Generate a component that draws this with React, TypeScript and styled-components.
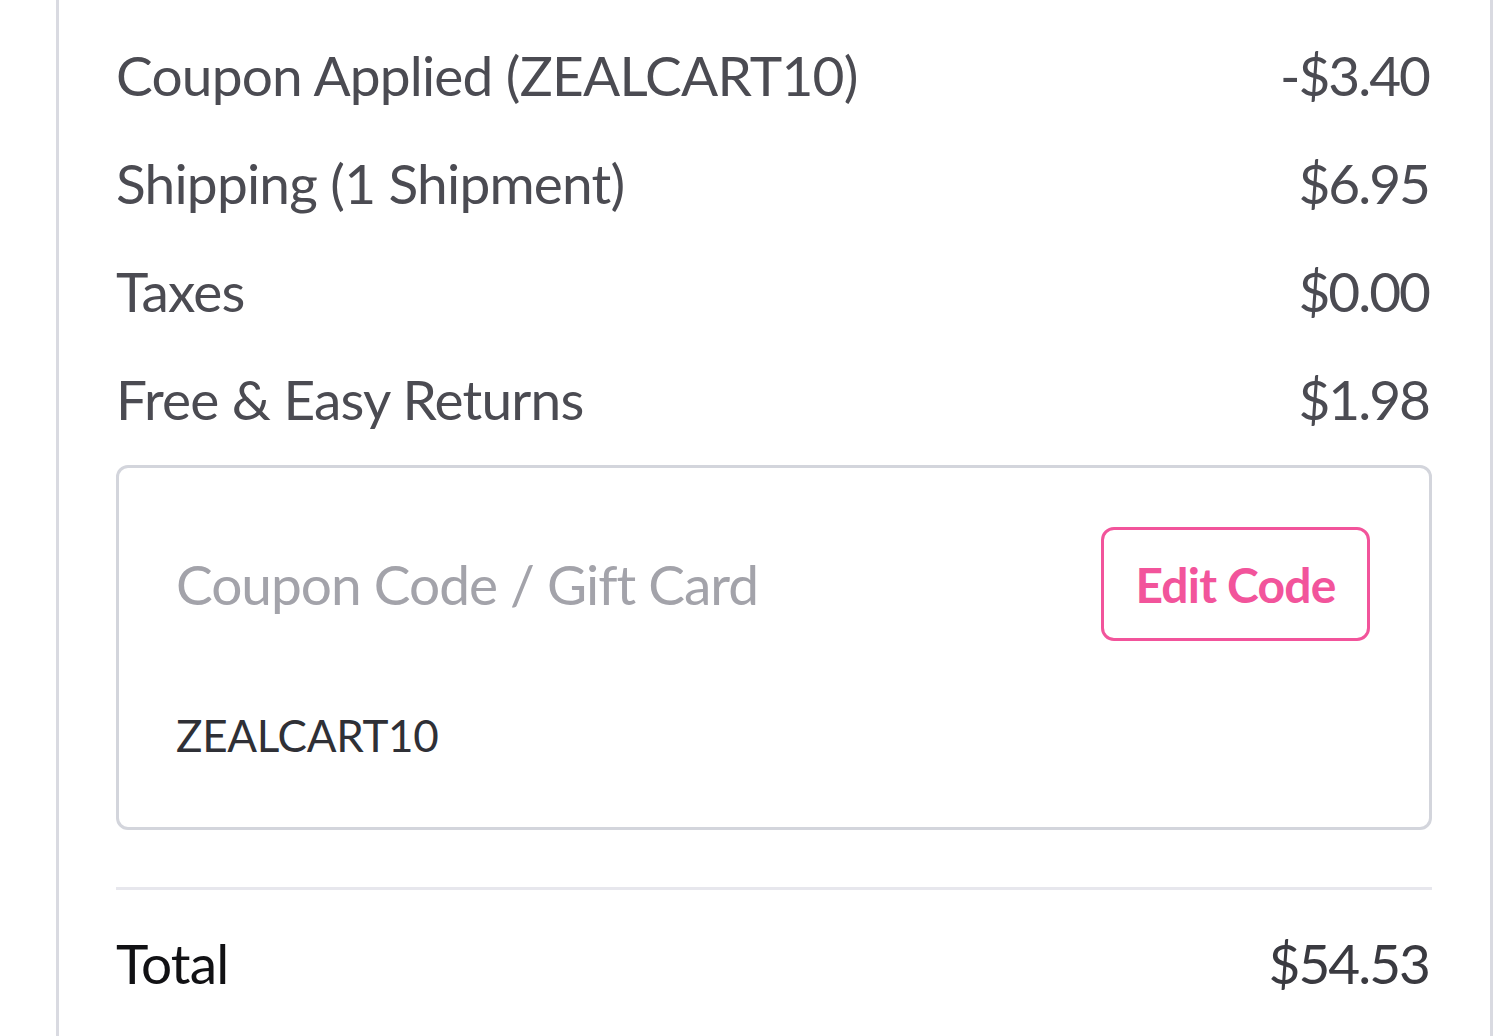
import React from "react";
import styled, { createGlobalStyle } from "styled-components";

const Global = createGlobalStyle`
  html, body { margin: 0; padding: 0; background: #ffffff; }
  body { font-family: Lato, "Noto Sans", sans-serif; }
`;

const Page = styled.div`
  height: 1036px;
  overflow: hidden;
  display: flex;
`;

const Panel = styled.section`
  margin-left: 56px;
  width: 1437px;
  box-sizing: border-box;
  border-left: 3px solid #d9dae1;
  border-right: 3px solid #d9dae1;
  padding: 21px 58px 0 57px;
  display: flex;
  flex-direction: column;
`;

const Row = styled.div<{ $strong?: boolean }>`
  display: flex;
  justify-content: space-between;
  align-items: center;
  height: 108px;
  font-size: 55px;
  letter-spacing: -0.8px;
  color: ${(p) => (p.$strong ? "#111114" : "#4b4b52")};
`;

const Amount = styled.span<{ $dark?: boolean }>`
  color: ${(p) => (p.$dark ? "#3a3a40" : "#4b4b52")};
  letter-spacing: -2px;
  margin-right: 3px;
`;

const CodeBox = styled.div`
  margin-top: 12px;
  height: 365px;
  box-sizing: border-box;
  border: 3px solid #d3d5dc;
  border-radius: 12px;
  padding: 59px 59px 0 57px;
  display: flex;
  flex-direction: column;
`;

const CodeRow = styled.div`
  display: flex;
  justify-content: space-between;
  align-items: center;
  height: 114px;
`;

const Placeholder = styled.span`
  font-size: 55px;
  letter-spacing: -1px;
  color: #a3a3aa;
`;

const EditButton = styled.button`
  height: 114px;
  width: 269px;
  box-sizing: border-box;
  border: 3px solid #f2549b;
  border-radius: 13px;
  background: #ffffff;
  color: #f2549b;
  font-family: Lato, "Noto Sans", sans-serif;
  font-size: 48px;
  letter-spacing: -0.8px;
  font-weight: 700;
  padding: 0;
`;

const AppliedCode = styled.div`
  margin-top: 54px;
  font-size: 44px;
  letter-spacing: -0.3px;
  color: #2f3036;
  height: 80px;
  display: flex;
  align-items: center;
`;

const Divider = styled.hr`
  margin: 57px 0 0 0;
  border: none;
  height: 3px;
  background: #e7e7ed;
`;

const TotalRow = styled(Row)`
  margin-top: 19px;
`;

const rows = [
  { label: "Coupon Applied (ZEALCART10)", value: "-$3.40" },
  { label: "Shipping (1 Shipment)", value: "$6.95" },
  { label: "Taxes", value: "$0.00" },
  { label: "Free & Easy Returns", value: "$1.98" },
];

export default function App() {
  return (
    <>
      <Global />
      <Page>
        <Panel>
          {rows.map((r) => (
            <Row key={r.label}>
              <span>{r.label}</span>
              <Amount>{r.value}</Amount>
            </Row>
          ))}
          <CodeBox>
            <CodeRow>
              <Placeholder>Coupon Code / Gift Card</Placeholder>
              <EditButton type="button">Edit Code</EditButton>
            </CodeRow>
            <AppliedCode>ZEALCART10</AppliedCode>
          </CodeBox>
          <Divider />
          <TotalRow $strong>
            <span>Total</span>
            <Amount $dark>$54.53</Amount>
          </TotalRow>
        </Panel>
      </Page>
    </>
  );
}
